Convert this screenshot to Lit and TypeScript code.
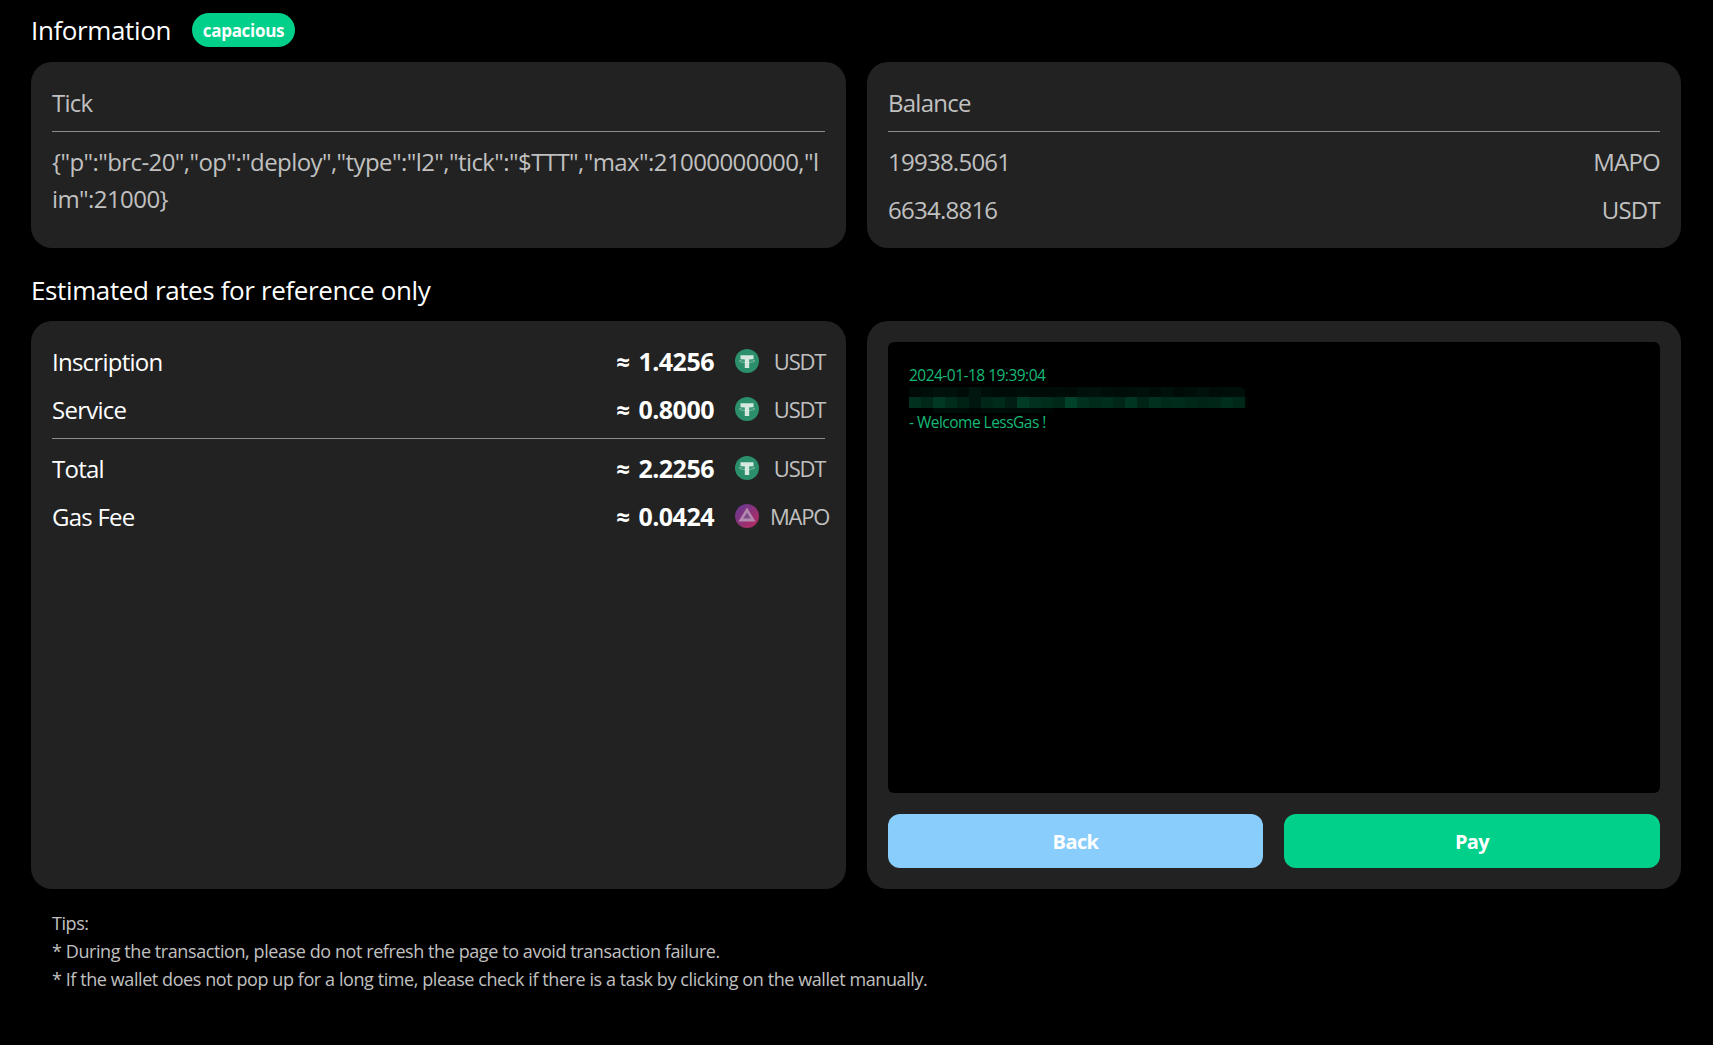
import { LitElement, html, css, svg } from "lit";
import { customElement } from "lit/decorators.js";

const tether = svg`<svg class="coin" viewBox="0 0 24 24"><circle cx="12" cy="12" r="12" fill="#2b8f6c"/><ellipse cx="12" cy="12" rx="7.800" ry="1.500" fill="none" stroke="#d5e9e1" stroke-opacity=".55" stroke-width=".9"/><path d="M5.500 6.300h13v3.700h-4.300v9h-4.400v-9H5.500z" fill="#d5e9e1"/></svg>`;
const mapo = svg`<svg class="coin" viewBox="0 0 24 24"><defs><linearGradient id="m" x1="0" y1="0" x2="1" y2="1"><stop offset="0" stop-color="#5f3a96"/><stop offset="1" stop-color="#bd2a5c"/></linearGradient></defs><circle cx="12" cy="12" r="12" fill="url(#m)"/><path d="M12 3.500 20.500 17.500H3.500z" fill="#b48ab0"/><path d="M12 8.500 15.800 14.500H8.200z" fill="#7e4c8a"/></svg>`;

const ROW1 = [10,14,18,16,12,22,14,10,12,14,12,10,12,10,16,18,14,12,14,16,12,16,10,14,18,12,14,14,0];
const ROW2 = [48,40,56,44,34,22,38,42,30,60,50,46,40,66,48,42,46,38,54,36,48,42,44,40,36,38,46,40,6];
const ROW3 = [0,0,10,12,10,6,10,12,10,12,10,6,0,0,0,0,0,0,0,0,0,0,0,0,0,0,0,0,0];

const rates = [
  { label: "Inscription", value: "1.4256", unit: "USDT" },
  { label: "Service", value: "0.8000", unit: "USDT" },
  null,
  { label: "Total", value: "2.2256", unit: "USDT" },
  { label: "Gas Fee", value: "0.0424", unit: "MAPO" },
];

@customElement("app-root")
export class AppRoot extends LitElement {
  static styles = css`
    :host { display: block; background: #000; min-height: 1045px; color: #fff; font-family: "Open Sans", "Noto Sans", sans-serif; }
    * { box-sizing: border-box; }
    .page { padding: 13px 32px 0 31px; }
    .head { display: flex; align-items: center; gap: 21px; height: 34px; margin-bottom: 15px; }
    .head h2, .h2 { margin: 0; font-size: 26px; font-weight: 400; letter-spacing: -0.38px; line-height: 34px; }
    .badge { height: 34px; width: 103px; border-radius: 17px; background: #00d08a; font-size: 17px; font-weight: 700; letter-spacing: -0.3px; display: flex; align-items: center; justify-content: center; }
    .grid { display: grid; grid-template-columns: 815px 814px; gap: 21px; }
    .card { background: #222; border-radius: 21px; padding: 21px; }
    .top { height: 186px; color: #c0c0c0; font-size: 24px; letter-spacing: -0.75px; }
    .title { height: 49px; line-height: 39px; border-bottom: 1px solid #8c8c8c; }
    .tick { margin-top: 11px; padding-right: 3px; line-height: 37px; word-break: break-all; letter-spacing: -0.58px; }
    .bals { margin-top: 6px; }
    .bal { display: flex; justify-content: space-between; line-height: 48px; }
    .sub { margin: 25px 0 14px; height: 34px; }
    .bottom { height: 568px; }
    .row { display: flex; align-items: center; height: 48px; font-size: 24px; letter-spacing: -0.75px; }
    .row:first-child { margin-top: -5px; }
    .row .lbl { flex: 1; }
    .approx { font-weight: 700; font-size: 24px; letter-spacing: 0; margin-right: 6px; }
    .val { font-weight: 700; font-size: 25px; letter-spacing: -0.5px; width: 78px; text-align: right; }
    .coin { width: 24px; height: 24px; margin-left: 21px; flex: none; }
    .unit { width: 65px; margin-left: 8px; margin-right: -7px; text-align: center; color: #c0c0c0; font-size: 22px; letter-spacing: -1.2px; white-space: nowrap; }
    hr { border: 0; border-top: 1px solid #8c8c8c; margin: 5px 0 5px; }
    .right { display: flex; flex-direction: column; }
    .term { flex: 1; background: #000; border-radius: 6px; padding: 21px; color: #16b877; font-size: 15.5px; letter-spacing: -0.52px; line-height: 24px; }
    .mosaic { display: flex; flex-direction: column; width: 339px; height: 26px; margin-bottom: -3px; border-radius: 0 10px 10px 0; overflow: hidden; }
    .mosaic div { display: flex; }
    .mosaic div:nth-child(1) { height: 10px; }
    .mosaic div:nth-child(2) { height: 11px; }
    .mosaic div:nth-child(3) { height: 5px; }
    .mosaic i { width: 12px; flex: none; display: block; }
    .btns { display: grid; grid-template-columns: 375px 376px; gap: 21px; margin-top: 21px; }
    .btn { height: 54px; border: 0; border-radius: 12px; color: #fff; font: 700 20px "Open Sans", sans-serif; letter-spacing: -0.6px; }
    .back { background: #88cdfb; }
    .pay { background: #00d08a; }
    .tips { padding: 20px 21px 0; color: #c0c0c0; font-size: 18px; letter-spacing: -0.42px; line-height: 28px; }
  `;

  private cell(v: number) {
    return html`<i style="background: rgb(0, ${v}, ${Math.round(v * 0.62)})"></i>`;
  }

  render() {
    return html`<div class="page">
      <div class="head"><h2>Information</h2><span class="badge">capacious</span></div>
      <div class="grid">
        <section class="card top">
          <div class="title">Tick</div>
          <div class="tick">{"p":"brc-20","op":"deploy","type":"l2","tick":"$TTT","max":21000000000,"lim":21000}</div>
        </section>
        <section class="card top">
          <div class="title">Balance</div>
          <div class="bals">
            <div class="bal"><span>19938.5061</span><span>MAPO</span></div>
            <div class="bal"><span>6634.8816</span><span>USDT</span></div>
          </div>
        </section>
      </div>
      <div class="h2 sub">Estimated rates for reference only</div>
      <div class="grid">
        <section class="card bottom">
          ${rates.map((r) =>
            r
              ? html`<div class="row">
                  <span class="lbl">${r.label}</span>
                  <span class="approx">≈</span><span class="val">${r.value}</span>
                  ${r.unit === "USDT" ? tether : mapo}
                  <span class="unit">${r.unit}</span>
                </div>`
              : html`<hr />`
          )}
        </section>
        <section class="card bottom right">
          <div class="term">
            <div>2024-01-18 19:39:04</div>
            <div class="mosaic">
              <div>${ROW1.map((v) => this.cell(v))}</div>
              <div>${ROW2.map((v) => this.cell(v))}</div>
              <div>${ROW3.map((v) => this.cell(v))}</div>
            </div>
            <div>- Welcome LessGas !</div>
          </div>
          <div class="btns">
            <button class="btn back">Back</button>
            <button class="btn pay">Pay</button>
          </div>
        </section>
      </div>
      <div class="tips">
        <div>Tips:</div>
        <div>* During the transaction, please do not refresh the page to avoid transaction failure.</div>
        <div>* If the wallet does not pop up for a long time, please check if there is a task by clicking on the wallet manually.</div>
      </div>
    </div>`;
  }
}
